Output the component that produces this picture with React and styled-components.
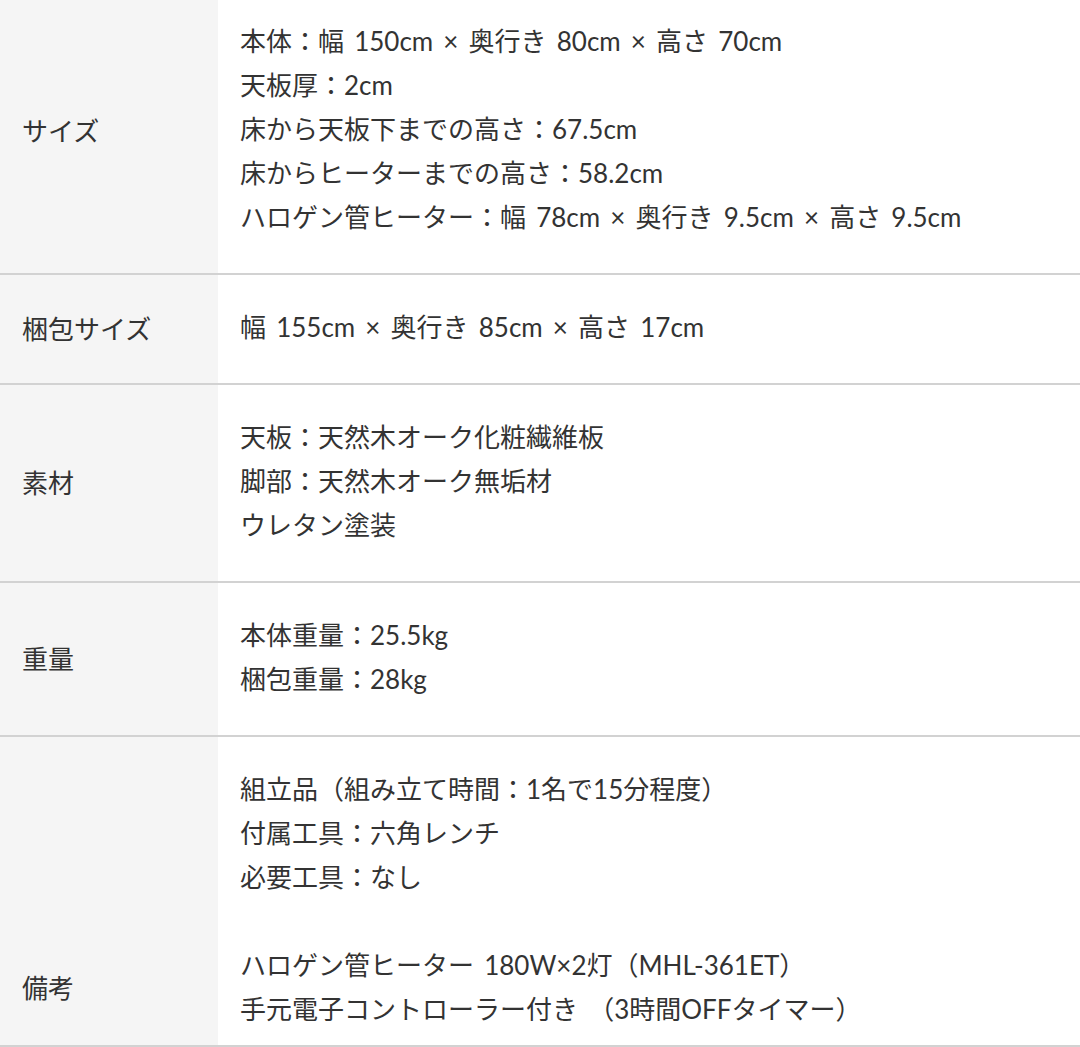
import React from "react";
import styled, { createGlobalStyle } from "styled-components";

const Global = createGlobalStyle`
  html, body { margin: 0; padding: 0; background: #fff; overflow: hidden; }
  body { font-family: "Lato", "Noto Sans CJK JP", "Noto Sans", sans-serif; color: #333; }
`;

const Table = styled.div`
  width: 1080px;
  margin-top: -11px;
  display: flex;
  flex-direction: column;
`;

const Row = styled.div`
  display: grid;
  grid-template-columns: 218px 1fr;
  border-bottom: 2px solid #d2d2d2;
`;

const Label = styled.div`
  background: #f5f5f5;
  padding: 0 0 ${p => p.$pb || 0}px 22px;
  display: flex;
  align-items: ${p => p.$align || "center"};
  font-size: 26px;
  line-height: 44px;
  color: #333;
`;

const Value = styled.div`
  padding: 30px 22px ${p => (p.$pb != null ? p.$pb : 34)}px;
  font-size: 26px;
  line-height: 44px;
  word-spacing: 3.5px;
  color: #333;
`;

const Line = styled.div`
  height: 44px;
  white-space: nowrap;
`;

const rows = [
  {
    label: "サイズ",
    lines: [
      "本体：幅 150cm × 奥行き 80cm × 高さ 70cm",
      "天板厚：2cm",
      "床から天板下までの高さ：67.5cm",
      "床からヒーターまでの高さ：58.2cm",
      "ハロゲン管ヒーター：幅 78cm × 奥行き 9.5cm × 高さ 9.5cm",
    ],
  },
  { label: "梱包サイズ", lines: ["幅 155cm × 奥行き 85cm × 高さ 17cm"] },
  {
    label: "素材",
    lines: ["天板：天然木オーク化粧繊維板", "脚部：天然木オーク無垢材", "ウレタン塗装"],
  },
  { label: "重量", lines: ["本体重量：25.5kg", "梱包重量：28kg"] },
  {
    label: "備考",
    align: "flex-end",
    pb: 35,
    valuePb: 14,
    lines: [
      "組立品（組み立て時間：1名で15分程度）",
      "付属工具：六角レンチ",
      "必要工具：なし",
      "",
      "ハロゲン管ヒーター 180W×2灯（MHL-361ET）",
      "手元電子コントローラー付き （3時間OFFタイマー）",
    ],
  },
];

export default function App() {
  return (
    <>
      <Global />
      <Table>
        {rows.map((r, i) => (
          <Row key={i}>
            <Label $align={r.align} $pb={r.pb}>{r.label}</Label>
            <Value $pb={r.valuePb}>
              {r.lines.map((l, j) => (
                <Line key={j}>{l}</Line>
              ))}
            </Value>
          </Row>
        ))}
      </Table>
    </>
  );
}
